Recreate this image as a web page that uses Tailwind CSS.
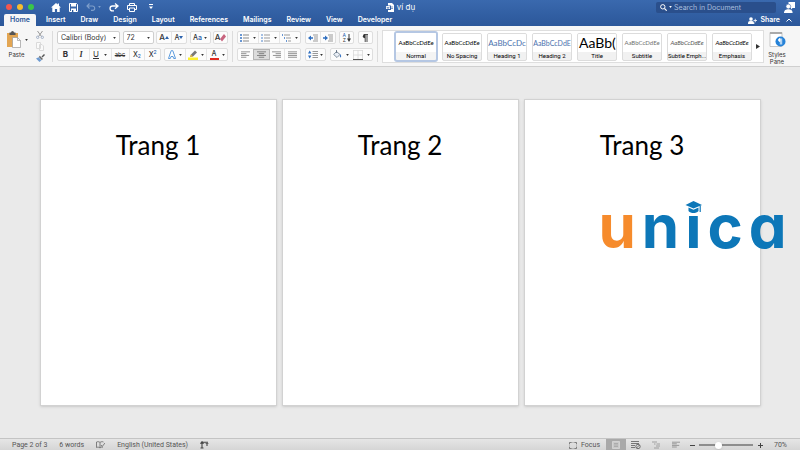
<!DOCTYPE html>
<html lang="vi">
<head>
  <meta charset="utf-8">
  <meta name="viewport" content="width=device-width, initial-scale=1">
  <title>ví dụ</title>
  <script src="https://cdn.jsdelivr.net/npm/@tailwindcss/browser@4"></script>
</head>
<body class="min-h-screen flex flex-col bg-[#eaeaea] font-['Inter','Liberation_Sans',sans-serif] text-[7px] leading-[9px] text-[#333] overflow-x-hidden">

  <!-- shared icons -->
  <svg class="hidden">
    <symbol id="caret" viewBox="0 0 4 3"><path d="M0 0h4L2 3z" fill="currentColor"/></symbol>
    <symbol id="lines-left" viewBox="0 0 10 8"><path d="M0 .5h10M0 2.5h6M0 4.5h9M0 6.5h6" stroke="#888" stroke-width="1"/></symbol>
    <symbol id="lines-center" viewBox="0 0 10 8"><path d="M0 .5h10M2 2.5h6M0 4.5h10M2 6.5h6" stroke="#777" stroke-width="1"/></symbol>
    <symbol id="lines-right" viewBox="0 0 10 8"><path d="M0 .5h10M4 2.5h6M1 4.5h9M4 6.5h6" stroke="#888" stroke-width="1"/></symbol>
    <symbol id="lines-full" viewBox="0 0 10 8"><path d="M0 .5h10M0 2.5h10M0 4.5h10M0 6.5h10" stroke="#888" stroke-width="1"/></symbol>
  </svg>

  <header class="bg-linear-to-b from-[#3a69ae] to-[#2b579a] text-white">
    <!-- title bar -->
    <div class="grid grid-cols-[1fr_auto_1fr] items-center h-[14px] pl-[6px] pr-[5px]">
      <div class="flex items-center">
        <div class="flex gap-[5px] mr-[17px]">
          <span class="size-[6px] rounded-full bg-[#f2574f]"></span>
          <span class="size-[6px] rounded-full bg-[#f7bd2e]"></span>
          <span class="size-[6px] rounded-full bg-[#3ac648]"></span>
        </div>
        <button type="button" aria-label="Home" class="mr-2"><svg class="w-[10px] h-[9px]" viewBox="0 0 10 9"><path d="M5 0 0 4.5h1.3V9h2.6V6h2.2v3h2.6V4.5H10L8 2.7V.6H6.7v.9z" fill="#fff"/></svg></button>
        <button type="button" aria-label="Save" class="mr-2"><svg class="w-[9px] h-[9px]" viewBox="0 0 9 9"><path d="M.5.5h7l1 1v7h-8z" fill="none" stroke="#fff"/><path d="M2 .5h5v3H2zM2 5.5h5v3H2z" fill="#fff"/><path d="M3 7h1.3v2H3z" fill="#2b579a"/></svg></button>
        <button type="button" aria-label="Undo" class="flex items-center gap-[2px] mr-2 text-[#7f9fcb]"><svg class="w-[10px] h-[8px]" viewBox="0 0 10 8"><path d="M3.500 .5 1 3l2.500 2.500M1.200 3H6.500a2.200 2.200 0 0 1 0 4.400H5" fill="none" stroke="currentColor" stroke-width="1.100"/></svg><svg class="w-[3px] h-[2px]"><use href="#caret"/></svg></button>
        <button type="button" aria-label="Redo" class="mr-2"><svg class="w-[10px] h-[9px]" viewBox="0 0 10 9"><path d="M6 .5 9 3 6 5.700M8.800 3H3.500a2.400 2.400 0 0 0 0 4.900H5" fill="none" stroke="#fff" stroke-width="1.300"/></svg></button>
        <button type="button" aria-label="Print" class="mr-3"><svg class="w-[10px] h-[9px]" viewBox="0 0 10 9"><path d="M2.500 2.500v-2h5v2M2.500 6.500h-2v-4h9v4h-2M2.500 5h5v3.500h-5z" fill="none" stroke="#fff"/></svg></button>
        <button type="button" aria-label="Customize toolbar"><svg class="w-[4px] h-[6px]" viewBox="0 0 4 6"><path d="M0 .5h4" stroke="#fff"/><path d="M0 2.500h4L2 5z" fill="#fff"/></svg></button>
      </div>
      <h1 class="flex items-center gap-[3px] text-[8px]">
        <svg class="w-[8px] h-[9px]" viewBox="0 0 8 9"><path d="M2 0h4l2 2v7H2V7h3V2.500H2z" fill="#fff"/><path d="M0 3h4v3H0z" fill="#fff"/><path d="m.8 3.600.6 1.900.6-1.400.6 1.400.6-1.900" fill="none" stroke="#2b579a" stroke-width=".5"/><path d="M4.500 4H7M4.500 5.500H7" stroke="#2b579a" stroke-width=".6"/></svg>
        ví dụ
      </h1>
      <div class="flex items-center justify-end gap-2">
        <label class="flex items-center gap-[2px] w-[120px] h-[11px] pl-1 rounded-[2px] bg-[#2a4f8c]">
          <svg class="w-[7px] h-[7px] shrink-0" viewBox="0 0 7 7"><circle cx="2.800" cy="2.800" r="2.200" fill="none" stroke="#fff"/><path d="m4.500 4.500 2.200 2.200" stroke="#fff" stroke-width="1.100"/></svg>
          <svg class="w-[3px] h-[2px] shrink-0"><use href="#caret"/></svg>
          <input type="search" aria-label="Search" placeholder="Search in Document" class="min-w-0 flex-1 bg-transparent text-[7px] placeholder:text-[#a9bedd] outline-none">
        </label>
        <button type="button" aria-label="Account"><svg class="w-[11px] h-[11px]" viewBox="0 0 11 11"><path d="M4.500 0H11v6H8.500L7 7.500V6H4.500z" fill="#fff"/><circle cx="4.300" cy="4.500" r="2.400" fill="#fff" stroke="#2f5ea3" stroke-width=".6"/><path d="M0 11c0-3 2-3.800 4.300-3.800S8.600 8 8.600 11z" fill="#fff"/></svg></button>
      </div>
    </div>

    <!-- ribbon tabs -->
    <div class="flex items-end justify-between h-3 pl-1 pr-2">
      <nav class="flex items-center gap-[15px] font-semibold leading-3">
        <a href="#" class="px-[6px] -mr-[5px] rounded-t-[2px] bg-[#f6f6f6] text-[#2b579a]">Home</a>
        <a href="#">Insert</a>
        <a href="#">Draw</a>
        <a href="#">Design</a>
        <a href="#">Layout</a>
        <a href="#">References</a>
        <a href="#">Mailings</a>
        <a href="#">Review</a>
        <a href="#">View</a>
        <a href="#">Developer</a>
      </nav>
      <div class="flex items-center gap-[6px] leading-3 font-semibold">
        <button type="button" class="flex items-center gap-[3px]"><svg class="w-[9px] h-[7px]" viewBox="0 0 9 7"><circle cx="3" cy="2" r="1.800" fill="#fff"/><path d="M0 7c0-2.300 1.200-3 3-3s3 .7 3 3zM5.500 3.500H9M7.250 1.750v3.500" fill="#fff" stroke="#fff" stroke-width=".8"/></svg>Share</button>
        <button type="button" aria-label="Collapse ribbon"><svg class="w-[6px] h-[4px]" viewBox="0 0 6 4"><path d="m.5 3.500 2.500-2.500 2.500 2.500" fill="none" stroke="#fff"/></svg></button>
      </div>
    </div>
  </header>

  <!-- ribbon -->
  <section class="flex items-stretch gap-1 pt-[5px] pb-1 pl-[6px] pr-[14px] bg-[#f6f6f6] border-b border-[#cfcfcf] text-[#333]">
    <div class="flex gap-[9px] w-[42px] shrink-0">
      <button type="button" class="w-[21px] flex flex-col items-center justify-between text-[6px] leading-[8px] pb-[3px]">
        <span class="flex items-center gap-1">
          <svg class="w-[15px] h-[17px]" viewBox="0 0 15 17"><path d="M1 2h11v14H1z" fill="#e3a653"/><path d="M3.500 1.500h1.500a1.500 1.500 0 0 1 3 0h1.500V4h-6z" fill="#555"/><path d="M6.500 6.500h5l3 3v7h-8z" fill="#fff" stroke="#999" stroke-width=".7"/><path d="M11.500 6.500v3h3" fill="none" stroke="#999" stroke-width=".7"/></svg>
          <svg class="w-[3px] h-[2px]"><use href="#caret"/></svg>
        </span>
        Paste
      </button>
      <div class="flex flex-col justify-between">
        <button type="button" aria-label="Cut"><svg class="w-[8px] h-[8px]" viewBox="0 0 8 8"><path d="m1.500 0 4 5.500M6.500 0l-4 5.500" stroke="#999"/><circle cx="1.700" cy="6.300" r="1.200" fill="none" stroke="#9ba9c2" stroke-width=".9"/><circle cx="6.300" cy="6.300" r="1.200" fill="none" stroke="#9ba9c2" stroke-width=".9"/></svg></button>
        <button type="button" aria-label="Copy"><svg class="w-[8px] h-[9px]" viewBox="0 0 8 9"><path d="M.5.5h4v6h-4zM3.500 2.500h2.500l1.500 1.500v4.500h-4z" fill="#fafafa" stroke="#dadada"/></svg></button>
        <button type="button" aria-label="Format painter"><svg class="w-[9px] h-[8px]" viewBox="0 0 9 8"><path d="m5.500 2.500 2.500-2.500 1 1-2.500 2.500z" fill="#555"/><path d="m3.800 1.800 3.200 3.200-1.200 1-3-3z" fill="#666"/><path d="M2.600 3.200 5.500 6.200 3.500 8 0 4.500z" fill="#6f9bd1"/></svg></button>
      </div>
    </div>
    <span class="w-px bg-[#dcdcdc]"></span>

    <!-- font group -->
    <div class="flex flex-col gap-1 w-[171px] shrink-0">
      <div class="flex justify-between h-[13px]">
        <label class="flex items-center w-[63px] pl-[3px] pr-[3px] bg-white border border-[#cfcfcf] rounded-[2px]">
          <select aria-label="Font" class="appearance-none flex-1 min-w-0 text-[7px] leading-[9px] outline-none"><option>Calibri (Body)</option></select>
          <svg class="w-[3px] h-[2px]"><use href="#caret"/></svg>
        </label>
        <label class="flex items-center w-[31px] pl-[3px] pr-[3px] bg-white border border-[#cfcfcf] rounded-[2px]">
          <select aria-label="Font size" class="appearance-none flex-1 min-w-0 text-[7px] leading-[9px] outline-none"><option>72</option></select>
          <svg class="w-[3px] h-[2px]"><use href="#caret"/></svg>
        </label>
        <div class="flex w-[31px] bg-[#fcfcfc] border border-[#dedede] rounded-[2px] font-medium">
          <button type="button" aria-label="Grow font" class="flex-1 flex items-center justify-center text-[8px]">A<svg class="w-[4px] h-[3px] text-[#2b62ad] rotate-180"><use href="#caret"/></svg></button>
          <button type="button" aria-label="Shrink font" class="flex-1 flex items-center justify-center border-l border-[#e4e4e4]">A<svg class="w-[4px] h-[3px] text-[#2b62ad]"><use href="#caret"/></svg></button>
        </div>
        <button type="button" aria-label="Change case" class="flex items-center justify-center gap-[2px] w-[21px] bg-[#fcfcfc] border border-[#dedede] rounded-[2px] font-medium"><span>A<span class="text-[#2b62ad]">a</span></span><svg class="w-[3px] h-[2px]"><use href="#caret"/></svg></button>
        <button type="button" aria-label="Clear formatting" class="flex items-center justify-center w-[15px] bg-[#fcfcfc] border border-[#dedede] rounded-[2px]"><span class="font-medium text-[8px]">A</span><svg class="w-[6px] h-[9px]" viewBox="0 0 6 9"><path d="m0 6 4-5 2 2.500-4 5z" fill="#c8647e"/></svg></button>
      </div>
      <div class="flex justify-between h-[13px]">
        <div class="flex w-[104px] bg-[#fcfcfc] border border-[#dedede] rounded-[2px] divide-x divide-[#e6e6e6]">
          <button type="button" class="flex-1 font-bold text-[8px]">B</button>
          <button type="button" class="flex-1 italic font-bold text-[8px] font-['Liberation_Serif',serif]">I</button>
          <button type="button" class="w-[22px] flex items-center justify-center gap-[5px] text-[8px]"><span class="underline">U</span><svg class="w-[3px] h-[2px]"><use href="#caret"/></svg></button>
          <button type="button" class="w-[18px] line-through text-[6px]">abc</button>
          <button type="button" aria-label="Subscript" class="flex-1 flex items-center justify-center font-medium"><span>X</span><span class="self-end text-[5px] leading-[7px] text-[#2b62ad]">2</span></button>
          <button type="button" aria-label="Superscript" class="flex-1 flex items-center justify-center font-medium"><span>X</span><span class="self-start text-[5px] leading-[7px] text-[#2b62ad]">2</span></button>
        </div>
        <div class="flex w-[64px] bg-[#fcfcfc] border border-[#dedede] rounded-[2px] divide-x divide-[#e6e6e6]">
          <button type="button" aria-label="Text effects" class="flex-1 flex items-center justify-center gap-[3px]"><svg class="w-[8px] h-[9px]" viewBox="0 0 8 9"><path d="M.5 8.500 3.200.7h1.600l2.700 7.800H5.700L5 6.500H3l-.7 2z" fill="#fff" stroke="#4a90d9" stroke-width=".9"/></svg><svg class="w-[3px] h-[2px]"><use href="#caret"/></svg></button>
          <button type="button" aria-label="Highlight" class="flex-1 flex items-center justify-center gap-[3px]"><svg class="w-[10px] h-[10px]" viewBox="0 0 10 10"><path d="M0 7.500h10V10H0z" fill="#fdf02c"/><path d="M3 4.500 7 .5l2 2-4 4-3 .5z" fill="#777"/><path d="m3 4.500 2 2-3 .5z" fill="#e8b93a"/></svg><svg class="w-[3px] h-[2px]"><use href="#caret"/></svg></button>
          <button type="button" aria-label="Font color" class="flex-1 flex items-center justify-center gap-[3px]"><span class="w-[9px] h-[10px] border-b-2 border-[#e02b20] leading-[8px] font-medium">A</span><svg class="w-[3px] h-[2px]"><use href="#caret"/></svg></button>
        </div>
      </div>
    </div>
    <span class="w-px bg-[#dcdcdc]"></span>

    <!-- paragraph group -->
    <div class="flex flex-col gap-1 w-[136px] shrink-0">
      <div class="flex justify-between h-[13px]">
        <div class="flex w-[64px] bg-[#fcfcfc] border border-[#dedede] rounded-[2px] divide-x divide-[#e6e6e6]">
          <button type="button" aria-label="Bullets" class="flex-1 flex items-center justify-center gap-[4px]"><svg class="w-[9px] h-[8px]" viewBox="0 0 9 8"><path d="M3 1h6M3 4h6M3 7h6" stroke="#888"/><path d="M0 1h2M0 4h2M0 7h2" stroke="#3a76c4" stroke-width="1.600"/></svg><svg class="w-[3px] h-[2px]"><use href="#caret"/></svg></button>
          <button type="button" aria-label="Numbering" class="flex-1 flex items-center justify-center gap-[4px]"><svg class="w-[9px] h-[8px]" viewBox="0 0 9 8"><path d="M3 1h6M3 4h6M3 7h6" stroke="#999"/><path d="M1 0v2M1 3v2M1 6v2" stroke="#3a76c4" stroke-width=".9"/></svg><svg class="w-[3px] h-[2px]"><use href="#caret"/></svg></button>
          <button type="button" aria-label="Multilevel list" class="flex-1 flex items-center justify-center gap-[4px]"><svg class="w-[9px] h-[8px]" viewBox="0 0 9 8"><path d="M2 1h6M4 4h5M6 7h3" stroke="#999"/><path d="M0 1h1M2 4h1M4 7h1" stroke="#3a76c4" stroke-width="1.500"/></svg><svg class="w-[3px] h-[2px]"><use href="#caret"/></svg></button>
        </div>
        <div class="flex w-[31px] bg-[#fcfcfc] border border-[#dedede] rounded-[2px] divide-x divide-[#e6e6e6]">
          <button type="button" aria-label="Decrease indent" class="flex-1 flex items-center justify-center"><svg class="w-[10px] h-[8px]" viewBox="0 0 10 8"><path d="M5 1h5M6 3h4M6 5h4M5 7h5" stroke="#999"/><path d="M0 4 3 1.500v1.700h2v1.600H3v1.700z" fill="#2f6fc0"/></svg></button>
          <button type="button" aria-label="Increase indent" class="flex-1 flex items-center justify-center"><svg class="w-[10px] h-[8px]" viewBox="0 0 10 8"><path d="M5 1h5M6 3h4M6 5h4M5 7h5" stroke="#999"/><path d="M5 4 2 1.500v1.700H0v1.600h2v1.700z" fill="#2f6fc0"/></svg></button>
        </div>
        <button type="button" aria-label="Sort" class="flex items-center justify-center gap-px w-[15px] bg-[#fcfcfc] border border-[#dedede] rounded-[2px]"><span class="flex flex-col text-[5px] leading-[5px]"><span class="text-[#2b62ad]">A</span><span>Z</span></span><svg class="w-[4px] h-[8px]" viewBox="0 0 4 8"><path d="M2 0v6" stroke="#333"/><path d="M0 4.500h4L2 8z" fill="#333"/></svg></button>
        <button type="button" aria-label="Show formatting marks" class="flex items-center justify-center w-[15px] bg-[#fcfcfc] border border-[#dedede] rounded-[2px]"><svg class="w-[6px] h-[8px]" viewBox="0 0 6 8"><path d="M3 0a2.100 2.100 0 0 0 0 4.300z" fill="#333"/><path d="M2.500.4H6M3.200.4V8M5 .4V8" stroke="#333" stroke-width=".9"/></svg></button>
      </div>
      <div class="flex justify-between h-[13px]">
        <div class="flex w-[64px] bg-[#fcfcfc] border border-[#dedede] rounded-[2px]">
          <button type="button" aria-label="Align left" class="flex-1 flex items-center justify-center"><svg class="w-[9px] h-[8px]"><use href="#lines-left"/></svg></button>
          <button type="button" aria-label="Center" aria-pressed="true" class="flex-1 flex items-center justify-center bg-[#dcdcdc] border border-[#b5b5b5]"><svg class="w-[9px] h-[8px]"><use href="#lines-center"/></svg></button>
          <button type="button" aria-label="Align right" class="flex-1 flex items-center justify-center"><svg class="w-[9px] h-[8px]"><use href="#lines-right"/></svg></button>
          <button type="button" aria-label="Justify" class="flex-1 flex items-center justify-center border-l border-[#e6e6e6]"><svg class="w-[9px] h-[8px]"><use href="#lines-full"/></svg></button>
        </div>
        <button type="button" aria-label="Line spacing" class="flex items-center justify-center gap-[2px] w-[21px] bg-[#fcfcfc] border border-[#dedede] rounded-[2px]"><svg class="w-[10px] h-[9px]" viewBox="0 0 10 9"><path d="M4.500 1.500H10M4.500 3.500H10M4.500 5.500H10M4.500 7.500H10" stroke="#999"/><path d="M0 3.500 1.700.5l1.700 3zM0 5.500h3.400l-1.700 3z" fill="#2f6fc0"/></svg><svg class="w-[3px] h-[2px]"><use href="#caret"/></svg></button>
        <div class="flex w-[43px] bg-[#fcfcfc] border border-[#dedede] rounded-[2px]">
          <button type="button" aria-label="Shading" class="flex-1 flex items-center justify-center gap-[4px]"><svg class="w-[9px] h-[10px]" viewBox="0 0 9 10"><path d="m3.500 1.500 3.500 3L4 7.500.7 4.500z" fill="#e9eef6" stroke="#678" stroke-width=".8"/><path d="M3.500 0v3" stroke="#567" stroke-width=".8"/><path d="M7 4c1 1 1.500 2 1 3s-1.500.2-1-1z" fill="#3a76c4"/></svg><svg class="w-[3px] h-[2px]"><use href="#caret"/></svg></button>
          <button type="button" aria-label="Borders" class="flex-1 flex items-center justify-center gap-[4px]"><svg class="w-[10px] h-[10px]" viewBox="0 0 10 10"><path d="M.5 0v9M5 0v9M9.500 0v9M0 .5h10M0 5h10" stroke="#d8d8d8" stroke-width=".8"/><path d="M0 9.500h10" stroke="#555"/></svg><svg class="w-[3px] h-[2px]"><use href="#caret"/></svg></button>
        </div>
      </div>
    </div>
    <span class="w-px bg-[#dcdcdc]"></span>

    <!-- style gallery -->
    <div class="flex-1 min-w-0 flex items-center -my-px pl-3 pr-[3px] bg-white border border-[#dedede] font-['Roboto',sans-serif] text-[6px] leading-[8px]">
      <div class="flex-1 min-w-0 flex items-center gap-[5px]">
        <button type="button" class="w-[44px] h-[31px] -mx-px flex flex-col border-2 border-[#b5c7e3] rounded-[3px] bg-[#f4f4f4] overflow-hidden text-black">
          <span class="w-full flex-1 flex items-center justify-center bg-white font-['Lato',sans-serif]">AaBbCcDdEe</span><span class="w-full">Normal</span>
        </button>
        <button type="button" class="w-[40px] h-[28px] flex flex-col border border-[#dcdcdc] rounded-[2px] bg-[#f1f1f1] overflow-hidden text-black">
          <span class="w-full flex-1 flex items-center justify-center bg-white font-['Lato',sans-serif]">AaBbCcDdEe</span><span class="w-full whitespace-nowrap">No Spacing</span>
        </button>
        <button type="button" class="w-[40px] h-[28px] flex flex-col border border-[#dcdcdc] rounded-[2px] bg-[#f1f1f1] overflow-hidden text-black">
          <span class="w-full flex-1 flex items-center justify-center bg-white font-['Lato',sans-serif] text-[8px] text-[#4a72ae]">AaBbCcDc</span><span class="w-full whitespace-nowrap">Heading 1</span>
        </button>
        <button type="button" class="w-[40px] h-[28px] flex flex-col border border-[#dcdcdc] rounded-[2px] bg-[#f1f1f1] overflow-hidden text-black">
          <span class="w-full flex-1 flex items-center justify-center bg-white font-['Lato',sans-serif] text-[7px] text-[#4a72ae]">AaBbCcDdE</span><span class="w-full whitespace-nowrap">Heading 2</span>
        </button>
        <button type="button" class="w-[40px] h-[28px] flex flex-col border border-[#dcdcdc] rounded-[2px] bg-[#f1f1f1] overflow-hidden text-black">
          <span class="w-full flex-1 flex items-center pl-px bg-white font-['Lato',sans-serif] text-[14px]">AaBb(</span><span class="w-full">Title</span>
        </button>
        <button type="button" class="w-[40px] h-[28px] flex flex-col border border-[#dcdcdc] rounded-[2px] bg-[#f1f1f1] overflow-hidden text-black">
          <span class="w-full flex-1 flex items-center justify-center bg-white font-['Lato',sans-serif] text-[#707070]">AaBbCcDdEe</span><span class="w-full">Subtitle</span>
        </button>
        <button type="button" class="w-[40px] h-[28px] flex flex-col border border-[#dcdcdc] rounded-[2px] bg-[#f1f1f1] overflow-hidden text-black">
          <span class="w-full flex-1 flex items-center justify-center bg-white font-['Lato',sans-serif] italic text-[#555]">AaBbCcDdEe</span><span class="w-full whitespace-nowrap">Subtle Emph...</span>
        </button>
        <button type="button" class="w-[40px] h-[28px] flex flex-col border border-[#dcdcdc] rounded-[2px] bg-[#f1f1f1] overflow-hidden text-black">
          <span class="w-full flex-1 flex items-center justify-center bg-white font-['Lato',sans-serif] italic">AaBbCcDdEe</span><span class="w-full">Emphasis</span>
        </button>
      </div>
      <button type="button" aria-label="More styles"><svg class="w-[4px] h-[5px]" viewBox="0 0 4 5"><path d="M0 0v5l4-2.500z" fill="#333"/></svg></button>
    </div>

    <button type="button" class="-mb-[3px] flex flex-col items-center justify-between w-[18px] shrink-0 text-[6px] leading-[7px]">
      <svg class="w-[17px] h-[17px]" viewBox="0 0 17 17"><path d="M1 1.500h12v14H1z" fill="#fff" stroke="#bbb" stroke-width=".8"/><path d="M1 1h12v2H1z" fill="#aaa"/><circle cx="11.500" cy="10.500" r="5" fill="#2582d8"/><path d="M11 7.500a1.500 1.500 0 0 0 0 3zM11.300 7.500v6M12.700 7.500v6" fill="#fff" stroke="#fff" stroke-width=".8"/></svg>
      <span>Styles<br>Pane</span>
    </button>
  </section>

  <!-- pages -->
  <main class="flex-1 flex items-start justify-center gap-[5px] pt-8 pb-8 font-['Lato',sans-serif] text-[26px] leading-8 text-black">
    <article class="w-[237px] aspect-[237/307] bg-white border border-[#d2d2d2] shadow-sm pt-[29px] text-center">Trang 1</article>
    <article class="w-[237px] aspect-[237/307] bg-white border border-[#d2d2d2] shadow-sm pt-[29px] text-center">Trang 2</article>
    <article class="relative w-[237px] aspect-[237/307] bg-white border border-[#d2d2d2] shadow-sm pt-[29px] text-center">
      Trang 3
      <!-- watermark, runs over the page edge -->
      <div class="absolute left-[74px] top-[89px] flex gap-[6px] font-['Inter',sans-serif] font-bold text-[60px] leading-[75px] text-[#0d77b8] [font-feature-settings:'cv11'_1]">
        <span class="text-[#f68b2c]">u</span>
        <span>n</span>
        <span class="relative">i
          <svg class="absolute left-0 top-[12px] w-[17px] h-[15px]" viewBox="0 0 17 15"><path d="M0 0h17v15H0z" fill="#fff"/><path d="M8.500 0 17 4 8.500 7.500.5 4z" fill="#0d77b8"/><path d="M3.500 6.500 8.500 8.700l5-2.200V10c-2.500 2.700-7.500 2.700-10 0z" fill="#0d77b8"/><path d="M15.200 4.500V11" stroke="#0d77b8" stroke-width="1.200"/></svg>
        </span>
        <span>c</span>
        <span>a</span>
      </div>
    </article>
  </main>

  <!-- status bar -->
  <footer class="flex items-center justify-between h-[13px] pl-3 pr-[13px] border-t border-[#c4c4c4] bg-linear-to-b from-[#e6e6e6] to-[#d4d4d4] font-['Roboto',sans-serif] text-[#555]">
    <div class="flex items-center gap-3">
      <span>Page 2 of 3</span>
      <span>6 words</span>
      <button type="button" aria-label="Proofing"><svg class="w-[9px] h-[8px]" viewBox="0 0 9 8"><path d="M4 1.500C3 .5 1.500.5.5 1v5.500c1-.5 2.500-.5 3.500.5 1-1 2-1 3-.7M4 1.500C5 .5 6.500.5 7.500 1M4 1.500V7M5 4l1.200 1.500L9 2" fill="none" stroke="#666" stroke-width=".8"/></svg></button>
      <button type="button">English (United States)</button>
      <button type="button" aria-label="Track changes"><svg class="w-[9px] h-[8px]" viewBox="0 0 9 8"><path d="M2 1v6M.5 7h3M2 1.200h6M7 2v3" stroke="#444" stroke-width="1.100" fill="none"/><path d="M.3 2.500 2 .3l1.700 2.200zM5.500 2.500h3" fill="#444" stroke="#444" stroke-width=".6"/></svg></button>
    </div>
    <div class="flex items-center h-full">
      <button type="button" class="flex items-center gap-1 mr-[6px]"><svg class="w-[8px] h-[7px]" viewBox="0 0 8 7"><path d="M.5 2V.5H2.500M5.500.5h2V2M7.500 5v1.500h-2M2.500 6.500h-2V5" fill="none" stroke="#666"/><path d="M.5.500h7v6h-7z" fill="none" stroke="#999" stroke-width=".5"/></svg>Focus</button>
      <button type="button" aria-label="Print layout" class="flex items-center justify-center w-5 h-full bg-[#a9a9a9]"><svg class="w-[8px] h-[8px]" viewBox="0 0 8 8"><path d="M.5.5h7v7h-7z" fill="#c9c9c9" stroke="#ddd" stroke-width=".7"/><path d="M2 2.500h4M2 4h4M2 5.500h4" stroke="#999" stroke-width=".6"/></svg></button>
      <button type="button" aria-label="Web layout" class="flex items-center justify-center w-5"><svg class="w-[10px] h-[8px]" viewBox="0 0 10 8"><path d="M0 .5h8M0 2.500h8M0 4.500h4M0 6.500h4" stroke="#777"/><circle cx="7" cy="5.500" r="2.200" fill="#ddd" stroke="#555" stroke-width=".8"/><path d="m5.500 7 3-3" stroke="#555" stroke-width=".8"/></svg></button>
      <button type="button" aria-label="Outline" class="flex items-center justify-center w-5"><svg class="w-[8px] h-[8px]" viewBox="0 0 8 8"><path d="M0 1h5M2 3h1.500M4.500 3H8M4 5h4M2 7h5" stroke="#999" stroke-width=".9"/></svg></button>
      <button type="button" aria-label="Draft" class="flex items-center justify-center w-5"><svg class="w-[8px] h-[8px]"><use href="#lines-left"/></svg></button>
      <button type="button" aria-label="Zoom out" class="ml-1 mr-1"><svg class="w-[5px] h-[5px]" viewBox="0 0 5 5"><path d="M0 2.500h5" stroke="#444"/></svg></button>
      <input type="range" aria-label="Zoom" min="0" max="100" value="34" class="appearance-none w-[54px] h-[2px] bg-[#8d8d8d] [&::-webkit-slider-thumb]:appearance-none [&::-webkit-slider-thumb]:size-[7px] [&::-webkit-slider-thumb]:rounded-full [&::-webkit-slider-thumb]:bg-white [&::-webkit-slider-thumb]:shadow">
      <button type="button" aria-label="Zoom in" class="ml-[5px] mr-[11px]"><svg class="w-[5px] h-[5px]" viewBox="0 0 5 5"><path d="M0 2.500h5M2.500 0v5" stroke="#444"/></svg></button>
      <span>70%</span>
    </div>
  </footer>
</body>
</html>
